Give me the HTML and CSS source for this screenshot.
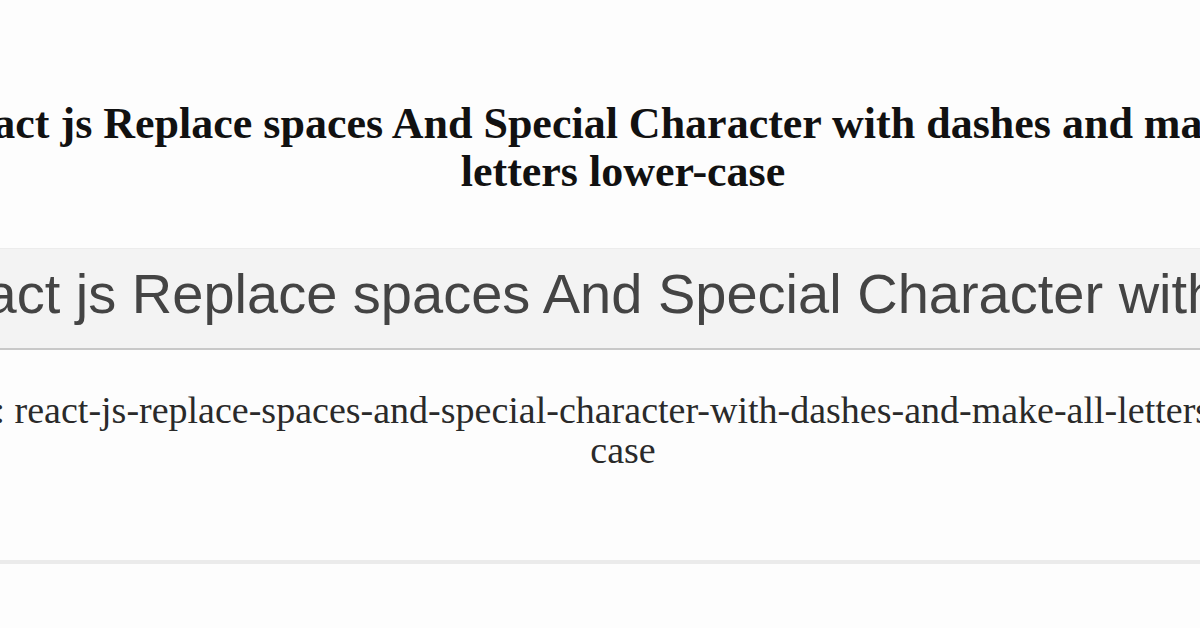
FILE: index.html
```html
<!DOCTYPE html>
<html lang="en">
  <head>
    <meta charset="UTF-8" />
    <meta name="viewport" content="width=device-width, initial-scale=1.0" />
    <title>Slug Generator</title>
    <link rel="stylesheet" href="styles.css">
  </head>
  <body>
    <div class="container">
      <h2>React js Replace spaces And Special Character with dashes and make all letters lower-case</h2>
      <input
        type="text"
        id="title"
        value="React js Replace spaces And Special Character with dashes and make all letters lower-case"
      />
      <p id="slug">Slug: react-js-replace-spaces-and-special-character-with-dashes-and-make-all-letters-lower-case</p>
    </div>
    <hr class="divider" />
  </body>
</html>
```
FILE: styles.css
```css
body {
  margin: 0;
  overflow: hidden;
  background: #fdfdfd;
  font-family: "Liberation Serif", serif;
}
.container {
  width: 1440px;
  margin-left: -97px;
  padding-top: 100px;
  text-align: center;
}
h2 {
  font-size: 44px;
  line-height: 48px;
  margin: 0 0 52px;
  color: #111;
}
input {
  display: block;
  box-sizing: border-box;
  width: 100%;
  height: 102px;
  padding: 0 11px 10px;
  font-family: "Liberation Sans", Arial, sans-serif;
  font-size: 56px;
  color: #444;
  background: #f3f3f3;
  border: none;
  border-top: 1px solid #ececec;
  border-bottom: 2px solid #c8c8c8;
  outline: none;
}
p {
  font-size: 38px;
  line-height: 40px;
  color: #2a2a2a;
  margin: 40px 14px 0;
}
.divider {
  margin: 90px 0 0;
  border: none;
  height: 4px;
  background: #ebebeb;
}
```
